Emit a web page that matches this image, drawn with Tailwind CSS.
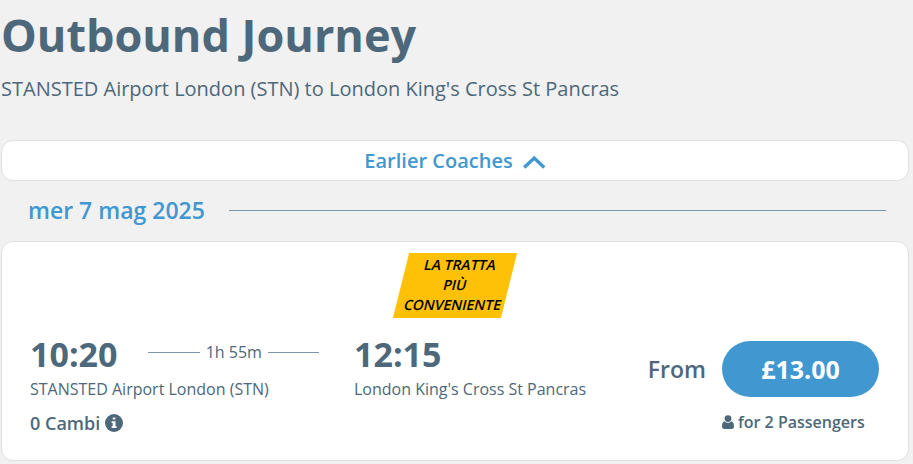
<!DOCTYPE html>
<html lang="en">
<head>
  <meta charset="UTF-8" />
  <title>Outbound Journey</title>
  <meta name="viewport" content="width=device-width, initial-scale=1.0" />
  <script src="https://cdn.jsdelivr.net/npm/@tailwindcss/browser@4"></script>
</head>
<body class="bg-[#f1f1f1] min-h-screen font-['Open_Sans',sans-serif] text-[#4d687a]">

  <main class="pl-px pr-1">
    <h1 class="pt-[7px] text-[45px] leading-[56px] font-bold">Outbound Journey</h1>
    <p class="mt-[10px] text-xl leading-8">STANSTED Airport London (STN) to London King's Cross St Pancras</p>

    <!-- Earlier coaches -->
    <button type="button" class="mt-[35px] flex h-[41px] w-full items-center justify-center gap-[9px] rounded-xl border border-[#e0e0e0] bg-white text-xl font-semibold text-[#4197d0]">
      Earlier Coaches
      <svg class="h-4 w-6" viewBox="0 0 24 16" fill="none" stroke="currentColor" stroke-width="3.4" aria-hidden="true">
        <path d="M2.2 14.4 L12.2 5 L22.2 14.4" />
      </svg>
    </button>

    <!-- Date -->
    <div class="flex h-[60px] items-center gap-6 pr-[23px] pb-px pl-[27px]">
      <h2 class="pb-px text-[23px] leading-8 font-semibold text-[#4197d0]">mer 7 mag 2025</h2>
      <div class="h-px flex-1 bg-[#7c95a5]"></div>
    </div>

    <!-- Journey card -->
    <section class="rounded-xl border border-[#e0e0e0] bg-white pt-[11px] pr-[29px] pb-[25px] pl-7">
      <div class="flex justify-center">
        <p class="w-[108px] -skew-x-14 bg-[#ffc107] px-2 pt-0.5 pb-[3px] text-center text-sm leading-5 font-semibold text-black">LA TRATTA PIÙ CONVENIENTE</p>
      </div>

      <div class="mt-[13px] grid grid-cols-[324px_1fr_auto]">
        <!-- Departure -->
        <div>
          <div class="flex items-center gap-[31px] pr-[35px]">
            <p class="text-[34px] leading-[46px] font-bold">10:20</p>
            <div class="flex flex-1 items-center gap-[6px] pb-1">
              <div class="h-px flex-1 bg-[#7c95a5]"></div>
              <span class="text-base leading-6">1h 55m</span>
              <div class="h-px flex-1 bg-[#7c95a5]"></div>
            </div>
          </div>
          <p class="text-base leading-6">STANSTED Airport London (STN)</p>
          <div class="mt-[10px] flex items-center gap-[5px]">
            <span class="text-lg leading-6 font-semibold">0 Cambi</span>
            <button type="button" aria-label="Info">
              <svg class="size-[18px]" viewBox="0 0 18 18" aria-hidden="true">
                <circle cx="9" cy="9" r="9" fill="currentColor" />
                <path d="M7.7 3.4h2.7v2.2H7.7z M6.6 7.2h3.9v5h1.1v1.9H6.6v-1.9h1.1V9.1H6.6z" fill="white" />
              </svg>
            </button>
          </div>
        </div>

        <!-- Arrival -->
        <div>
          <p class="text-[34px] leading-[46px] font-bold">12:15</p>
          <p class="text-base leading-6">London King's Cross St Pancras</p>
        </div>

        <!-- Price -->
        <div class="grid grid-cols-[auto_157px] content-start items-center gap-x-4 pt-[10px]">
          <span class="text-[23px] leading-8 font-semibold">From</span>
          <button type="button" class="h-14 rounded-full bg-[#4197d0] pt-0.5 text-[25px] font-bold text-white">£13.00</button>
          <p class="col-start-2 mt-[13px] flex items-center gap-1 text-base leading-6 font-semibold">
            <svg class="h-[14px] w-3" viewBox="0 0 12 14" fill="currentColor" aria-hidden="true">
              <circle cx="6" cy="3.6" r="3.4" />
              <path d="M2.6 6.2C.9 6.6 0 8.6 0 11.2 0 13 1 14 2.5 14h7c1.5 0 2.5-1 2.5-2.8 0-2.6-.9-4.6-2.6-5C8.5 7.3 7.3 7.7 6 7.7S3.5 7.3 2.6 6.2z" />
            </svg>
            for 2 Passengers
          </p>
        </div>
      </div>
    </section>
  </main>

</body>
</html>
